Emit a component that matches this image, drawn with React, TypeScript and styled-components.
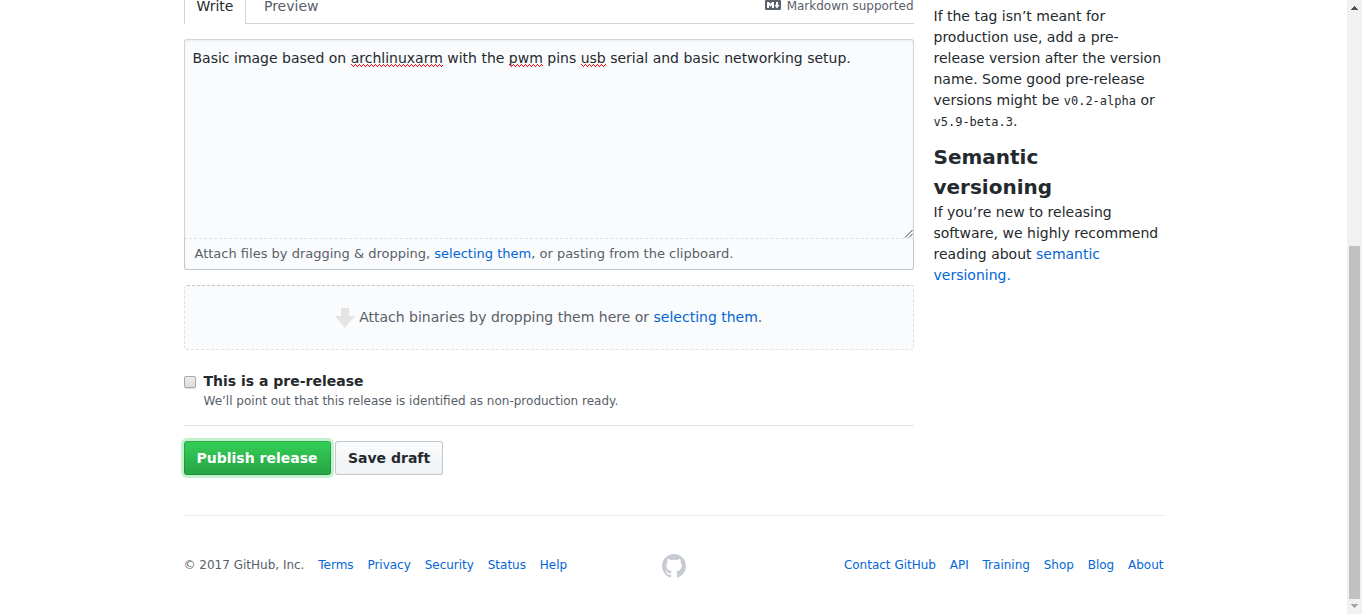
import React from "react";
import styled, { createGlobalStyle, css } from "styled-components";

const Global = createGlobalStyle`
  * { box-sizing: border-box; }
  html, body { margin: 0; padding: 0; overflow: hidden; }
  body {
    font: 14px/21px "DejaVu Sans", sans-serif;
    color: #24292e;
    background: #fff;
  }
`;

const Window = styled.div`
  display: flex;
  height: 614px;
  overflow: hidden;
`;

const Page = styled.main`
  flex: 1;
  min-width: 0;
`;

const Container = styled.div`
  width: 980px;
  margin: 0 auto;
`;

const Columns = styled.div`
  display: flex;
  gap: 20px;
  height: 475px;
`;

const Form = styled.form`
  width: 730px;
`;

const Link = styled.a`
  color: #0366d6;
  text-decoration: none;
`;

const TabBar = styled.div`
  display: flex;
  height: 24px;
  border-bottom: 1px solid #d1d5da;
`;

const Tab = styled.span<{ $active?: boolean }>`
  height: 24px;
  padding: 0 12px;
  line-height: 21px;
  color: #586069;
  border: 0 solid transparent;
  border-width: 0 1px;
  ${(p) =>
    p.$active &&
    css`
      color: #24292e;
      background: #fff;
      border-color: #d1d5da;
    `}
  & + & {
    margin-left: 4.5px;
  }
`;

const TabText = styled.span`
  display: block;
  margin-top: -4px;
`;

const MarkdownHint = styled.div`
  display: flex;
  align-items: center;
  gap: 6px;
  height: 18px;
  margin: -3px 0 0 auto;
  font-size: 12px;
  color: #586069;
  svg {
    display: block;
    margin-top: -2px;
  }
`;

const Editor = styled.div`
  position: relative;
  height: 199px;
  margin-top: 15px;
  padding: 8px;
  background: #fafbfc;
  border: 1px solid #d1d5da;
  border-bottom: 0;
  border-radius: 3px 3px 0 0;
  box-shadow: inset 0 1px 2px rgba(27, 31, 35, 0.075);
`;

const Misspelled = styled.span`
  position: relative;
  &::after {
    content: "";
    position: absolute;
    left: 0;
    right: 0;
    top: 14px;
    height: 3px;
    background:
      linear-gradient(90deg, #f00 1px, transparent 1px) 0 0 / 4px 1px repeat-x,
      linear-gradient(90deg, #f00 1px, transparent 1px) 1px 1px / 2px 1px repeat-x,
      linear-gradient(90deg, #f00 1px, transparent 1px) 2px 2px / 4px 1px repeat-x;
  }
`;

const Grip = styled.svg`
  position: absolute;
  right: 0;
  bottom: 0;
`;

const DragBar = styled.p`
  height: 32px;
  margin: 0;
  padding: 5px 10px;
  font-size: 13px;
  line-height: 20px;
  color: #586069;
  background: #fafbfc;
  border: 1px solid #c3c8cf;
  border-top: 1px dashed #dfe2e5;
  border-radius: 0 0 3px 3px;
`;

const DropZone = styled.div`
  display: flex;
  align-items: center;
  justify-content: center;
  gap: 4.5px;
  height: 65px;
  margin-top: 15px;
  color: #586069;
  background: #fafbfc;
  border: 1px dashed #dfe2e5;
  border-top-color: #c3c8cf;
  border-radius: 3px;
`;

const PreRelease = styled.div`
  display: flex;
  gap: 8px;
  height: 76px;
  padding-top: 21px;
  border-bottom: 1px solid #dfe2e5;
`;

const CheckBox = styled.span`
  width: 12px;
  height: 12px;
  margin-top: 5px;
  border: 1px solid #a6a6a6;
  border-radius: 2px;
  background: linear-gradient(#ededed, #dedede);
  box-shadow: 0 1px 1px rgba(0, 0, 0, 0.12);
`;

const Note = styled.p`
  margin: 0;
  font-size: 12px;
  line-height: 18px;
  color: #586069;
`;

const Actions = styled.div`
  display: flex;
  gap: 4.45px;
  margin-top: 15px;
`;

const Button = styled.button<{ $primary?: boolean }>`
  height: 34px;
  padding: 0 12px;
  font: bold 14px/20px "DejaVu Sans", sans-serif;
  white-space: nowrap;
  color: #24292e;
  border: 1px solid rgba(27, 31, 35, 0.2);
  border-radius: 3px;
  background: linear-gradient(-180deg, #fafbfc 0%, #eff3f6 90%) padding-box, #eff3f6;
  ${(p) =>
    p.$primary &&
    css`
      color: #fff;
      background: linear-gradient(-180deg, #34d058 0%, #28a745 90%);
      background-origin: border-box;
      box-shadow: 0 0 0 3px rgba(52, 208, 88, 0.3);
    `}
`;

const Sidebar = styled.aside`
  width: 230px;
  padding-top: 6px;
  p {
    margin: 0;
  }
`;

const Heading = styled.h3`
  margin: 10px 0 0;
  font-size: 20px;
  line-height: 30px;
`;

const Code = styled.code`
  font-family: "DejaVu Sans Mono", monospace;
  font-size: 12px;
  line-height: 1;
`;

const Footer = styled.footer`
  display: flex;
  justify-content: space-between;
  height: 100px;
  margin-top: 40px;
  padding-top: 40px;
  font-size: 12px;
  line-height: 18px;
  color: #586069;
  border-top: 1px solid #eaecef;
`;

const FooterGroup = styled.div<{ $end?: boolean }>`
  display: flex;
  flex: 1;
  gap: 13.8px;
  justify-content: ${(p) => (p.$end ? "flex-end" : "flex-start")};
`;

const Mark = styled.svg`
  margin-top: -2px;
`;

const ScrollTrack = styled.div`
  display: flex;
  flex-direction: column;
  align-items: center;
  width: 15px;
  height: 614px;
  background: #f1f1f1;
`;

const ScrollThumb = styled.div`
  width: 11px;
  height: 353px;
  margin-top: 231px;
  background: #c1c1c1;
`;

export default function App() {
  return (
    <>
      <Global />
      <Window>
        <Page>
          <Container>
            <Columns>
              <Form>
                <TabBar>
                  <Tab $active>
                    <TabText>Write</TabText>
                  </Tab>
                  <Tab>
                    <TabText>Preview</TabText>
                  </Tab>
                  <MarkdownHint>
                    <svg width="16" height="16" viewBox="0 0 16 16" fill="#586069">
                      <path fillRule="evenodd" d="M14.85 3H1.15C.52 3 0 3.52 0 4.15v7.69C0 12.48.52 13 1.15 13h13.69c.64 0 1.15-.52 1.15-1.15v-7.7C16 3.52 15.48 3 14.85 3zM9 11H7V8L5.5 9.92 4 8v3H2V5h2l1.5 2L7 5h2v6zm2.99.5L9.5 8H11V5h2v3h1.5l-2.51 3.5z" />
                    </svg>
                    Markdown supported
                  </MarkdownHint>
                </TabBar>
                <Editor>
                  Basic image based on <Misspelled>archlinuxarm</Misspelled> with the{" "}
                  <Misspelled>pwm</Misspelled> pins <Misspelled>usb</Misspelled> serial and basic
                  networking setup.
                  <Grip width="10" height="10" viewBox="0 0 10 10" stroke="#444">
                    <path d="M2 9.5 9.5 2M6 9.5 9.5 6" />
                  </Grip>
                </Editor>
                <DragBar>
                  Attach files by dragging &amp; dropping, <Link>selecting them</Link>, or pasting
                  from the clipboard.
                </DragBar>
                <DropZone>
                  <svg width="20" height="20" viewBox="0 0 20 20" fill="#e5e5e5">
                    <path d="M6 0h8v8h6L10 20 0 8h6z" />
                  </svg>
                  <span>
                    Attach binaries by dropping them here or <Link>selecting them</Link>.
                  </span>
                </DropZone>
                <PreRelease>
                  <CheckBox role="checkbox" aria-checked={false} />
                  <div>
                    <strong>This is a pre-release</strong>
                    <Note>
                      We’ll point out that this release is identified as non-production ready.
                    </Note>
                  </div>
                </PreRelease>
                <Actions>
                  <Button type="button" $primary>
                    Publish release
                  </Button>
                  <Button type="button">Save draft</Button>
                </Actions>
              </Form>
              <Sidebar>
                <p>
                  If the tag isn’t meant for production use, add a pre-release version after the
                  version name. Some good pre-release versions might be <Code>v0.2-alpha</Code> or{" "}
                  <Code>v5.9-beta.3</Code>.
                </p>
                <Heading>Semantic versioning</Heading>
                <p>
                  If you’re new to releasing software, we highly recommend reading about{" "}
                  <Link>semantic versioning.</Link>
                </p>
              </Sidebar>
            </Columns>
            <Footer>
              <FooterGroup>
                <span>© 2017 GitHub, Inc.</span>
                <Link>Terms</Link>
                <Link>Privacy</Link>
                <Link>Security</Link>
                <Link>Status</Link>
                <Link>Help</Link>
              </FooterGroup>
              <Mark width="24" height="24" viewBox="0 0 16 16" fill="#c6cbd1">
                <path fillRule="evenodd" d="M8 0C3.58 0 0 3.58 0 8c0 3.54 2.29 6.53 5.47 7.59.4.07.55-.17.55-.38 0-.19-.01-.82-.01-1.49-2.01.37-2.53-.49-2.69-.94-.09-.23-.48-.94-.82-1.13-.28-.15-.68-.52-.01-.53.63-.01 1.08.58 1.23.82.72 1.21 1.87.87 2.33.66.07-.52.28-.87.51-1.07-1.78-.2-3.64-.89-3.64-3.95 0-.87.31-1.59.82-2.15-.08-.2-.36-1.02.08-2.12 0 0 .67-.21 2.2.82.64-.18 1.32-.27 2-.27s1.36.09 2 .27c1.53-1.04 2.2-.82 2.2-.82.44 1.1.16 1.92.08 2.12.51.56.82 1.27.82 2.15 0 3.07-1.87 3.75-3.65 3.95.29.25.54.73.54 1.48 0 1.07-.01 1.93-.01 2.2 0 .21.15.46.55.38A8.01 8.01 0 0 0 16 8c0-4.42-3.58-8-8-8z" />
              </Mark>
              <FooterGroup $end>
                <Link>Contact GitHub</Link>
                <Link>API</Link>
                <Link>Training</Link>
                <Link>Shop</Link>
                <Link>Blog</Link>
                <Link>About</Link>
              </FooterGroup>
            </Footer>
          </Container>
        </Page>
        <ScrollTrack>
          <svg width="15" height="15" shapeRendering="crispEdges" fill="#505050">
            <path d="M7 6h1v1h1v1h1v1h1v1H4V9h1V8h1V7h1z" />
          </svg>
          <ScrollThumb />
          <svg width="15" height="15" shapeRendering="crispEdges" fill="#a3a3a3">
            <path d="M4 5h7v1h-1v1H9v1H8v1H7V8H6V7H5V6H4z" />
          </svg>
        </ScrollTrack>
      </Window>
    </>
  );
}
